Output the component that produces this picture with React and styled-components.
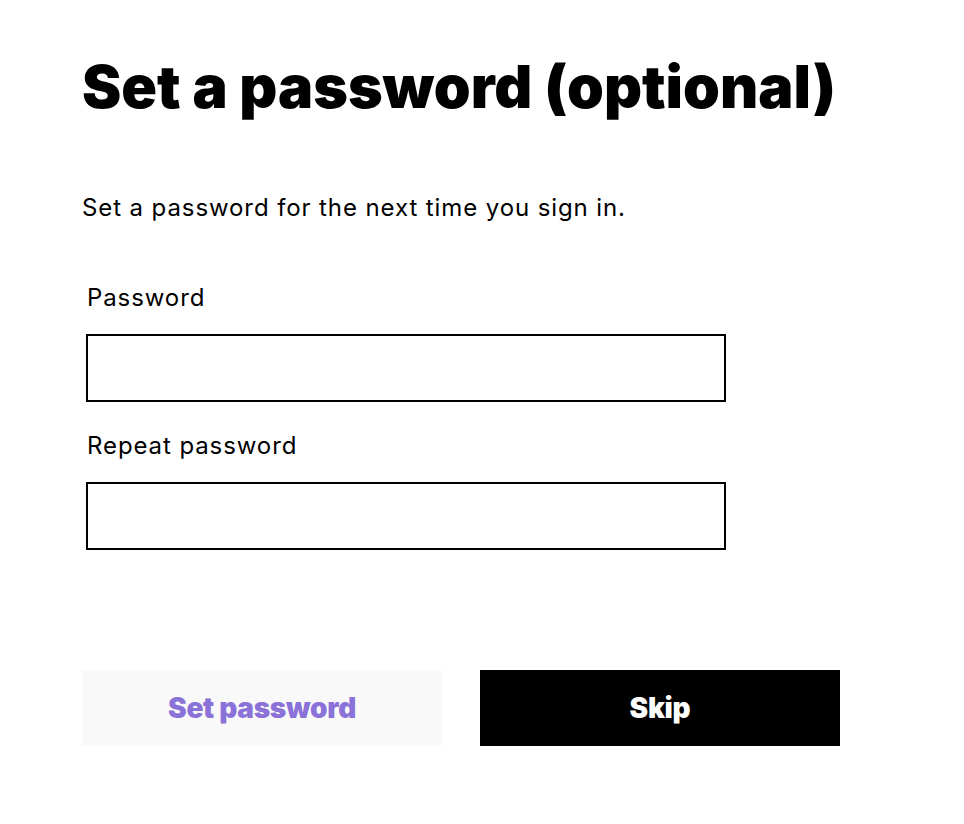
import React from "react";
import styled, { createGlobalStyle } from "styled-components";

const Global = createGlobalStyle`
  html, body { margin: 0; padding: 0; background: #fff; }
  body { font-family: Inter, "Noto Sans", sans-serif; color: #000; }
`;

const Page = styled.main`
  padding: 51px 0 0 82px;
  width: 758px;
`;

const Title = styled.h1`
  margin: 0;
  font-size: 59px;
  line-height: 71px;
  font-weight: 900;
  letter-spacing: 0;
`;

const Lead = styled.p`
  margin: 72px 0 0;
  font-size: 24px;
  line-height: 28px;
  font-weight: 400;
  letter-spacing: 0.9px;
`;

const Form = styled.form`
  margin: 62px 0 0 4px;
  display: flex;
  flex-direction: column;
`;

const Field = styled.div`
  display: flex;
  flex-direction: column;
  gap: 22px;
  margin-bottom: ${(p) => p.$mb || 0}px;
`;

const Label = styled.label`
  font-size: 24px;
  line-height: 28px;
  letter-spacing: 0.9px;
  padding-left: 1px;
`;

const Input = styled.input`
  box-sizing: border-box;
  width: 640px;
  height: 68px;
  border: 2px solid #000;
  border-radius: 0;
  padding: 0 16px;
  font: inherit;
  font-size: 22px;
  outline: none;
  background: #fff;
`;

const Actions = styled.div`
  margin-top: 120px;
  display: flex;
  gap: 38px;
`;

const Button = styled.button`
  width: 360px;
  height: 76px;
  border: none;
  border-radius: 0;
  font-family: Inter, "Noto Sans", sans-serif;
  font-weight: 900;
  font-size: 28px;
  letter-spacing: -0.3px;
  cursor: pointer;
  background: ${(p) => (p.$primary ? "#000" : "#f9f9f9")};
  color: ${(p) => (p.$primary ? "#fff" : "#8a72d8")};
`;

export default function App() {
  return (
    <>
      <Global />
      <Page>
        <Title>Set a password (optional)</Title>
        <Lead>Set a password for the next time you sign in.</Lead>
        <Form onSubmit={(e) => e.preventDefault()}>
          <Field $mb={30}>
            <Label htmlFor="pw">Password</Label>
            <Input id="pw" type="password" />
          </Field>
          <Field>
            <Label htmlFor="pw2">Repeat password</Label>
            <Input id="pw2" type="password" />
          </Field>
        </Form>
        <Actions>
          <Button type="button">Set password</Button>
          <Button type="button" $primary>Skip</Button>
        </Actions>
      </Page>
    </>
  );
}
